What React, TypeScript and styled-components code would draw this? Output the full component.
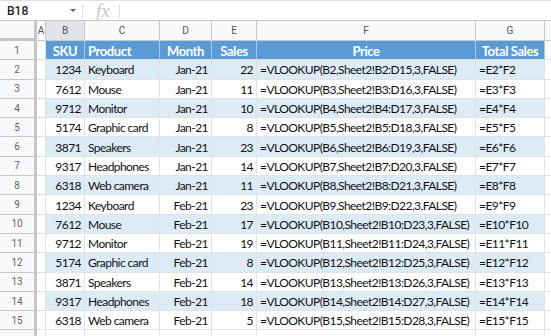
import styled, { createGlobalStyle } from 'styled-components';

const GlobalStyle = createGlobalStyle`
  html, body { margin: 0; padding: 0; background: #fff; overflow: hidden; }
  body { font-family: Lato, "Open Sans", sans-serif; }
`;

const COLS = ['A', 'B', 'C', 'D', 'E', 'F', 'G', ''];
const WIDTHS = '37px 9px 39px 75px 52px 45px 219px 69px 1fr';
const ROW_H = 19.3;

type Row = [string, string, string, string];

const DATA: Row[] = [
  ['1234', 'Keyboard', 'Jan-21', '22'],
  ['7612', 'Mouse', 'Jan-21', '11'],
  ['9712', 'Monitor', 'Jan-21', '10'],
  ['5174', 'Graphic card', 'Jan-21', '8'],
  ['3871', 'Speakers', 'Jan-21', '23'],
  ['9317', 'Headphones', 'Jan-21', '14'],
  ['6318', 'Web camera', 'Jan-21', '11'],
  ['1234', 'Keyboard', 'Feb-21', '23'],
  ['7612', 'Mouse', 'Feb-21', '17'],
  ['9712', 'Monitor', 'Feb-21', '19'],
  ['5174', 'Graphic card', 'Feb-21', '8'],
  ['3871', 'Speakers', 'Feb-21', '14'],
  ['9317', 'Headphones', 'Feb-21', '18'],
  ['6318', 'Web camera', 'Feb-21', '5'],
];

const Page = styled.div`
  width: 551px;
  height: 336px;
  overflow: hidden;
  background: #fff;
`;

const FormulaBar = styled.div`
  height: 19px;
  display: flex;
  align-items: center;
  border-top: 1px solid #e1e1e1;
  border-bottom: 1px solid #c7c7c7;
  font-family: Roboto, Arial, sans-serif;
`;

const NameBox = styled.div`
  width: 69px;
  display: flex;
  align-items: center;
  justify-content: space-between;
  padding: 0 6px 0 7px;
  font-size: 12px;
  font-weight: 500;
  color: #222;
  border-right: 1px solid #e0e0e0;
  height: 14px;
`;

const Caret = styled.span`
  width: 0;
  height: 0;
  border-left: 3px solid transparent;
  border-right: 3px solid transparent;
  border-top: 3px solid #666;
`;

const Fx = styled.span`
  font-family: "Liberation Serif", serif;
  font-style: italic;
  font-size: 19px;
  color: #c8c8c8;
  padding: 0 9px 0 13px;
  border-right: 1px solid #e0e0e0;
  line-height: 14px;
  height: 14px;
`;

const Grid = styled.div`
  display: grid;
  grid-template-columns: ${WIDTHS};
  grid-auto-rows: ${ROW_H}px;
  grid-template-rows: 20px;
`;

const Corner = styled.div`
  background: #f8f9fa;
  border-right: 3px solid #c4c7c5;
  border-bottom: 3px solid #c4c7c5;
  box-sizing: border-box;
`;

const ColHead = styled.div<{ $active?: boolean }>`
  background: ${(p) => (p.$active ? '#e1e4e8' : '#f8f9fa')};
  border-right: 1px solid #c8c8c8;
  border-bottom: 1px solid #c8c8c8;
  box-sizing: border-box;
  display: flex;
  align-items: center;
  justify-content: center;
  font-family: Roboto, Arial, sans-serif;
  font-size: 10px;
  color: #555;
`;

const RowHead = styled.div`
  background: #f8f9fa;
  border-right: 3px solid #c4c7c5;
  border-bottom: 1px solid #c8c8c8;
  box-sizing: border-box;
  display: flex;
  align-items: center;
  justify-content: center;
  font-family: Roboto, Arial, sans-serif;
  font-size: 10px;
  color: #666;
`;

const Cell = styled.div<{ $tone: 'head' | 'band' | 'plain'; $align?: string }>`
  background: ${(p) => (p.$tone === 'head' ? '#5b9bd5' : p.$tone === 'band' ? '#ddebf7' : '#fff')};
  color: ${(p) => (p.$tone === 'head' ? '#fff' : '#111')};
  font-weight: ${(p) => (p.$tone === 'head' ? 700 : 400)};
  font-size: ${(p) => (p.$tone === 'head' ? 13 : 12)}px;
  letter-spacing: ${(p) => (p.$tone === 'head' ? -0.4 : -0.55)}px;
  border-right: 1px solid ${(p) => (p.$tone === 'head' ? '#a9c8e8' : '#e2e3e3')};
  border-bottom: 1px solid #e2e3e3;
  box-sizing: border-box;
  display: flex;
  align-items: center;
  justify-content: ${(p) => p.$align ?? 'flex-start'};
  padding: 1px 3px 0;
  white-space: nowrap;
  overflow: hidden;
`;

const HEAD: [string, string][] = [
  ['SKU', 'center'],
  ['Product', 'flex-start'],
  ['Month', 'center'],
  ['Sales', 'center'],
  ['Price', 'center'],
  ['Total Sales', 'center'],
];

export default function App() {
  return (
    <Page>
      <GlobalStyle />
      <FormulaBar>
        <NameBox>
          B18
          <Caret />
        </NameBox>
        <Fx>fx</Fx>
      </FormulaBar>
      <Grid>
        <Corner />
        {COLS.map((c, i) => (
          <ColHead key={i} $active={c === 'B'}>
            {c}
          </ColHead>
        ))}

        <RowHead>1</RowHead>
        <Cell $tone="plain" />
        {HEAD.map(([t, a]) => (
          <Cell key={t} $tone="head" $align={a}>
            {t}
          </Cell>
        ))}
        <Cell $tone="plain" />

        {DATA.map((r, i) => {
          const n = i + 2;
          const tone = n % 2 === 0 ? 'band' : 'plain';
          return [
            <RowHead key={`h${n}`}>{n}</RowHead>,
            <Cell key={`a${n}`} $tone="plain" />,
            <Cell key={`b${n}`} $tone={tone} $align="flex-end">
              {r[0]}
            </Cell>,
            <Cell key={`c${n}`} $tone={tone}>
              {r[1]}
            </Cell>,
            <Cell key={`d${n}`} $tone={tone} $align="flex-end">
              {r[2]}
            </Cell>,
            <Cell key={`e${n}`} $tone={tone} $align="flex-end">
              {r[3]}
            </Cell>,
            <Cell key={`f${n}`} $tone={tone}>
              {`=VLOOKUP(B${n},Sheet2!B${n}:D${n + 13},3,FALSE)`}
            </Cell>,
            <Cell key={`g${n}`} $tone={tone}>
              {`=E${n}*F${n}`}
            </Cell>,
            <Cell key={`x${n}`} $tone="plain" />,
          ];
        })}

        <RowHead />
        {COLS.map((_, i) => (
          <Cell key={`r16${i}`} $tone="plain" />
        ))}
      </Grid>
    </Page>
  );
}
